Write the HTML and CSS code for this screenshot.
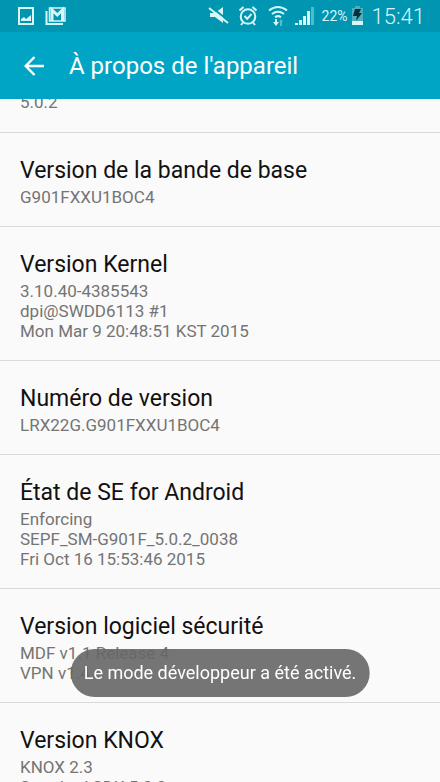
FILE: index.html
```html
<!DOCTYPE html>
<html lang="fr">
<head>
<meta charset="utf-8">
<meta name="viewport" content="width=device-width, initial-scale=1">
<title>À propos de l'appareil</title>
<link rel="stylesheet" href="styles.css">
</head>
<body>
<div class="top">
  <div class="status">
    <svg class="icon-photo" width="18" height="20" viewBox="0 0 18 20" aria-hidden="true"><path fill="none" stroke="currentColor" stroke-width="2" d="M2 2h14v16H2z"/><path fill="currentColor" d="M4 15v-2l3-2 2 2 5-4v6z"/></svg>
    <svg class="icon-mail" width="22" height="20" viewBox="0 0 22 20" aria-hidden="true"><path fill="none" stroke="currentColor" stroke-width="2" d="M1.500 5v13H18"/><path fill="none" stroke="currentColor" stroke-width="1.500" d="M4.500 2h15.500v13H4.500z"/><path fill="none" stroke="currentColor" stroke-width="3" d="M7 15V4l5.300 5L17.500 4v11"/></svg>
    <span class="spacer"></span>
    <svg width="22" height="22" viewBox="0 0 22 22" aria-hidden="true"><path fill="currentColor" d="M2 8h5l8-6v16l-8-6H2z"/><path stroke="#0095b1" stroke-width="2" d="M3 2l18 14"/><path stroke="currentColor" stroke-width="2" d="M1 3l19 15"/></svg>
    <svg class="icon-alarm" width="20" height="22" viewBox="0 0 20 22" aria-hidden="true"><g fill="none" stroke="currentColor" stroke-width="2"><circle cx="10" cy="11.500" r="7.300"/><path d="M6.500 11l2.700 2.800L13.500 9M1.500 5.500l4-3.500M18.500 5.500L14.500 2M5 17.500l-2 2.500M15 17.500l2 2.500"/></g></svg>
    <svg class="icon-wifi" width="22" height="22" viewBox="0 0 22 22" aria-hidden="true"><g fill="none" stroke="currentColor" stroke-width="2"><path d="M2 5.500q9-7 18 0M5 9q6-4.500 12 0M8 12.300q3-2.300 6 0"/><path d="M9 14v5"/></g><path fill="currentColor" d="M6 17h6l-3 4z"/><path fill="#4dc0d1" d="M12 17l2-3 2 3h-1v4h-2v-4z"/></svg>
    <svg class="icon-signal" width="20" height="20" viewBox="0 0 20 20" aria-hidden="true"><path fill="currentColor" d="M0 17h3v2H0zM4 14h3v5H4zM8 10h3v9H8zM12 5h3v14h-3z"/><path fill="#4dbbce" d="M16 1h3v18h-3z"/></svg>
    <span class="percent">22%</span>
    <svg class="icon-battery" width="13" height="20" viewBox="0 0 13 20" aria-hidden="true"><path fill="#4daebd" d="M4 0h5v2h3v17H1V2h3z"/><path fill="#d8f5f8" d="M1 15h11v4H1z"/><path fill="#082f39" d="M4 3h6l-2 4h3l-6 8 1-5H2z"/></svg>
    <time class="clock">15:41</time>
  </div>
  <header class="bar">
    <button class="back" type="button" aria-label="Retour"><svg width="22" height="22" viewBox="0 0 22 22" aria-hidden="true"><path fill="none" stroke="currentColor" stroke-width="2.400" d="M20 11H2M10.500 2L1.700 11l8.800 9"/></svg></button>
    <h1>À propos de l'appareil</h1>
  </header>
</div>
<main class="list">
  <section class="item continued"><p>5.0.2</p></section>
  <section class="item"><h2>Version de la bande de base</h2><p>G901FXXU1BOC4</p></section>
  <section class="item"><h2>Version Kernel</h2><p>3.10.40-4385543<br>dpi@SWDD6113 #1<br>Mon Mar 9 20:48:51 KST 2015</p></section>
  <section class="item"><h2>Numéro de version</h2><p>LRX22G.G901FXXU1BOC4</p></section>
  <section class="item"><h2>État de SE for Android</h2><p>Enforcing<br>SEPF_SM-G901F_5.0.2_0038<br>Fri Oct 16 15:53:46 2015</p></section>
  <section class="item"><h2>Version logiciel sécurité</h2><p>MDF v1.1 Release 4<br>VPN v1.4</p></section>
  <section class="item"><h2>Version KNOX</h2><p>KNOX 2.3<br>Standard SDK 5.3.0</p></section>
</main>
<div class="toast" role="status">Le mode développeur a été activé.</div>
</body>
</html>
```
FILE: styles.css
```css
* { box-sizing: border-box; }
html { height: 100%; }
body {
  height: 100%;
  margin: 0;
  overflow: hidden;
  background: #fafafa;
  color: #111;
  font-family: Roboto, sans-serif;
}
h1, h2, p { margin: 0; font-weight: 400; }
svg { display: block; flex: none; }

.top { position: relative; z-index: 1; color: #fff; }
.status {
  display: flex;
  align-items: center;
  height: 32px;
  padding: 0 15px 0 17px;
  background: #0095b1;
  color: #d8f5f8;
}
.icon-mail { margin-left: 10px; }
.spacer { flex: 1; }
.icon-alarm { margin-left: 8px; }
.icon-wifi { margin-left: 9px; }
.icon-signal { margin-left: 6px; }
.percent { margin-left: 7px; font-size: 14px; }
.icon-battery { margin-left: 3px; }
.clock { margin-left: 8px; font-size: 22px; font-weight: 300; }

.bar {
  display: flex;
  align-items: center;
  height: 67px;
  padding-left: 24px;
  background: #00a5c6;
}
.back {
  padding: 0;
  border: 0;
  background: none;
  color: inherit;
}
.bar h1 { margin-left: 23px; font-size: 24px; line-height: 32px; }

.list { margin-top: -7px; }
.item {
  padding: 22px 20px 20px;
  border-bottom: 1px solid #dadada;
}
.continued { padding-top: 0; }
.item h2 { font-size: 23px; line-height: 32px; }
.item p { color: #747474; font-size: 17px; line-height: 20px; }
.item:nth-child(n + 2) { padding-bottom: 19px; }

.toast {
  position: fixed;
  bottom: 85px;
  left: 50%;
  z-index: 2;
  padding: 12px 13px;
  border-radius: 24px;
  background: rgba(102, 102, 102, 0.9);
  color: #fff;
  font-size: 18px;
  line-height: 24px;
  white-space: nowrap;
  transform: translateX(-50%);
}
```
